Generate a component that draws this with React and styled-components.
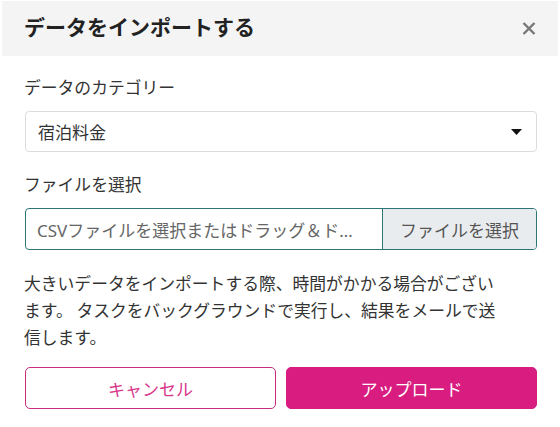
import React from 'react';
import styled, { createGlobalStyle } from 'styled-components';

const GlobalStyle = createGlobalStyle`
  body {
    margin: 0;
    background: #fff;
    font-family: 'Noto Sans CJK JP', 'Noto Sans', sans-serif;
    color: #333;
  }
`;

const StyledModal = styled.div`
  width: 560px;
  height: 427px;
  background: #fff;
  padding-top: 1px;
  box-sizing: border-box;
`;

const StyledHeader = styled.header`
  display: flex;
  align-items: center;
  justify-content: space-between;
  height: 55px;
  box-sizing: border-box;
  margin: 0 2px;
  padding: 0 20px 4px 22px;
  background: #f4f4f4;

  h2 {
    margin: 0;
    font-size: 21px;
    font-weight: 700;
    color: #222;
    line-height: 1;
  }
`;

const CloseButton = styled.button`
  display: flex;
  align-items: center;
  justify-content: center;
  width: 18px;
  height: 18px;
  margin-top: 3px;
  padding: 0;
  border: 0;
  background: none;
  cursor: pointer;
`;

const StyledBody = styled.div`
  padding: 19px 23px 0 25px;
`;

const Label = styled.div`
  font-size: 16.8px;
  line-height: 25px;
  color: #333;
  margin: 0 0 11px -1px;
`;

const Select = styled.div`
  display: flex;
  align-items: center;
  justify-content: space-between;
  height: 41px;
  box-sizing: border-box;
  padding: 0 14px 0 12px;
  border: 1px solid #dcdcdc;
  border-radius: 4px;
  font-size: 17px;
  color: #333;
  margin-bottom: 20px;
`;

const FileInput = styled.div`
  display: flex;
  height: 42px;
  box-sizing: border-box;
  border: 1px solid #2c7776;
  border-radius: 4px;
  overflow: hidden;
  font-size: 17px;
  color: #666;
`;

const FileName = styled.div`
  flex: 1;
  min-width: 0;
  display: flex;
  align-items: center;
  padding: 0 14px 0 11px;

  span {
    font-family: 'Noto Sans', 'Noto Sans CJK JP', sans-serif;
    overflow: hidden;
    white-space: nowrap;
    text-overflow: ellipsis;
  }
`;

const FileButton = styled.div`
  display: flex;
  align-items: center;
  justify-content: center;
  width: 153px;
  border-left: 1px solid #2c7776;
  background: #e9ecef;
  color: #555;
`;

const Notice = styled.p`
  margin: 20px 0 0 -1px;
  padding-right: 32px;
  font-size: 16.8px;
  line-height: 27px;
  color: #333;
`;

const Actions = styled.div`
  display: grid;
  grid-template-columns: 1fr 1fr;
  gap: 10px;
  margin-top: 16px;
`;

const Button = styled.button`
  height: 42px;
  border-radius: 5px;
  font-family: inherit;
  font-size: 17px;
  cursor: pointer;
  border: 1px solid ${({ $primary }) => ($primary ? '#d91c80' : '#c92b7e')};
  background: ${({ $primary }) => ($primary ? '#d91c80' : '#fff')};
  color: ${({ $primary }) => ($primary ? '#fff' : '#d6368a')};
`;

const App = () => (
  <>
    <GlobalStyle />
    <StyledModal>
      <StyledHeader>
        <h2>データをインポートする</h2>
        <CloseButton aria-label="閉じる">
          <svg width="14" height="13" viewBox="0 0 14 13">
            <path d="M1.5 1 L12.5 12 M12.5 1 L1.5 12" stroke="#777" strokeWidth="2.4" />
          </svg>
        </CloseButton>
      </StyledHeader>

      <StyledBody>
        <Label>データのカテゴリー</Label>
        <Select>
          <span>宿泊料金</span>
          <svg width="11" height="6" viewBox="0 0 11 6">
            <path d="M0 0 H11 L5.5 6 Z" fill="#111" />
          </svg>
        </Select>

        <Label>ファイルを選択</Label>
        <FileInput>
          <FileName>
            <span>CSVファイルを選択またはドラッグ＆ドロップしてください</span>
          </FileName>
          <FileButton>ファイルを選択</FileButton>
        </FileInput>

        <Notice>
          大きいデータをインポートする際、時間がかかる場合がございます。 タスクをバックグラウンドで実行し、結果をメールで送信します。
        </Notice>

        <Actions>
          <Button>キャンセル</Button>
          <Button $primary>アップロード</Button>
        </Actions>
      </StyledBody>
    </StyledModal>
  </>
);

export default App;
